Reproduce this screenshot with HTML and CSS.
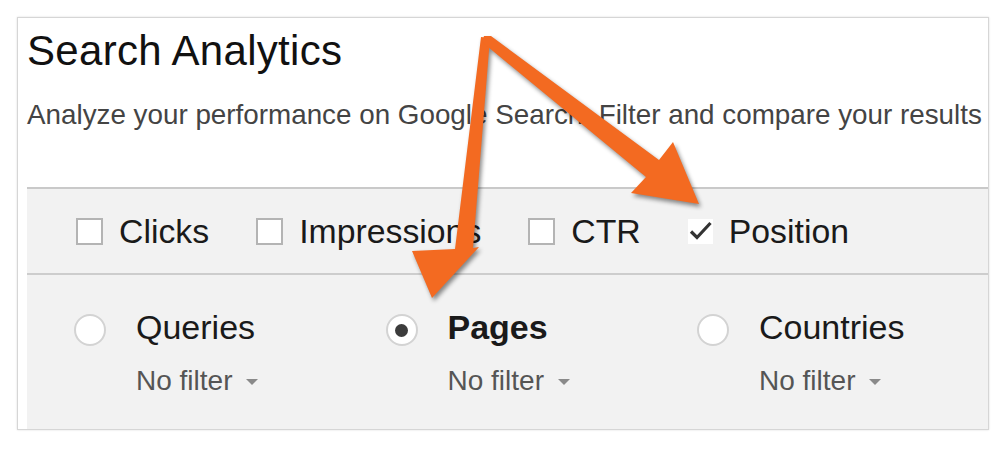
FILE: index.html
```html
<!DOCTYPE html>
<html>
<head>
<meta charset="utf-8">
<link rel="stylesheet" href="styles.css">
</head>
<body>
<div class="card">
  <h1 class="title">Search Analytics</h1>
  <p class="subtitle">Analyze your performance on Google Search. Filter and compare your results</p>
  <div class="panel">
    <div class="metrics">
      <label class="metric"><span class="box"></span><span class="mlabel">Clicks</span></label>
      <label class="metric"><span class="box"></span><span class="mlabel">Impressions</span></label>
      <label class="metric"><span class="box"></span><span class="mlabel">CTR</span></label>
      <label class="metric"><span class="box checked"><svg viewBox="0 0 25 25" width="25" height="25"><path d="M3 12.5 L9 18.5 L22.5 4" fill="none" stroke="#333" stroke-width="3.2"/></svg></span><span class="mlabel">Position</span></label>
    </div>
    <div class="dims">
      <div class="dim">
        <span class="radio"></span>
        <div class="dtext">
          <div class="dlabel">Queries</div>
          <div class="filter">No filter<span class="caret"></span></div>
        </div>
      </div>
      <div class="dim">
        <span class="radio on"><span class="dot"></span></span>
        <div class="dtext">
          <div class="dlabel bold">Pages</div>
          <div class="filter">No filter<span class="caret"></span></div>
        </div>
      </div>
      <div class="dim">
        <span class="radio"></span>
        <div class="dtext">
          <div class="dlabel">Countries</div>
          <div class="filter">No filter<span class="caret"></span></div>
        </div>
      </div>
    </div>
  </div>
</div>
<svg class="arrows" width="1007" height="449" viewBox="0 0 1007 449">
  <polygon points="481,37 490,38 473,248 479,247 432,298 412,251 455,249" />
  <polygon points="484,36 491,36 659,160 673,142 699,204 631,193 646,177 482,42" />
</svg>
</body>
</html>
```
FILE: styles.css
```css
html, body {
  margin: 0;
  padding: 0;
  background: #fff;
}
body {
  width: 1007px;
  height: 449px;
  overflow: hidden;
  position: relative;
  font-family: "Liberation Sans", Arial, sans-serif;
  color: #222;
}
.card {
  margin: 17px 0 0 17px;
  width: 961px;
  height: 402px;
  border: 1px solid #d6d6d6;
  box-shadow: 0 0 2px #ddd;
  background: #fff;
  padding: 9px 0 0 9px;
  box-sizing: content-box;
  display: flex;
  flex-direction: column;
}
.title {
  margin: 0;
  font-weight: normal;
  font-size: 42px;
  line-height: 48px;
  color: #111;
  letter-spacing: 0.3px;
}
.subtitle {
  margin: 24px 0 0 0;
  font-size: 27.8px;
  line-height: 32px;
  color: #444;
  white-space: nowrap;
}
.panel {
  margin-top: 56px;
  flex: 1;
  background: #f2f2f2;
  border-top: 2px solid #c9c9c9;
  display: flex;
  flex-direction: column;
}
.metrics {
  height: 84px;
  display: flex;
  align-items: center;
  gap: 47px;
  padding-left: 49px;
  border-bottom: 2px solid #cdcdcd;
}
.metric {
  display: flex;
  align-items: center;
  gap: 16px;
}
.box {
  width: 23px;
  height: 23px;
  border: 2px solid #b4b4b4;
  background: #fff;
  display: block;
}
.box.checked {
  border: none;
  width: 25px;
  height: 25px;
}
.box svg {
  display: block;
}
.mlabel {
  font-size: 33.8px;
  line-height: 40px;
  color: #1a1a1a;
}
.dims {
  display: flex;
  padding: 32px 0 0 47px;
}
.dim {
  flex: none;
  width: 311.5px;
  display: flex;
  gap: 30px;
}
.radio {
  width: 28px;
  height: 28px;
  border: 2px solid #d3d3d3;
  border-radius: 50%;
  background: #fff;
  margin-top: 7px;
  display: flex;
  align-items: center;
  justify-content: center;
  flex: none;
}
.dot {
  width: 13px;
  height: 13px;
  border-radius: 50%;
  background: #3c3c3c;
}
.dlabel {
  font-size: 34px;
  line-height: 40px;
  color: #1a1a1a;
}
.dlabel.bold {
  font-weight: bold;
}
.filter {
  margin-top: 18px;
  font-size: 28px;
  line-height: 32px;
  color: #555;
  display: flex;
  align-items: center;
}
.caret {
  display: inline-block;
  width: 0;
  height: 0;
  margin-left: 14px;
  margin-top: 2px;
  border-left: 6px solid transparent;
  border-right: 6px solid transparent;
  border-top: 6px solid #8a8a8a;
}
.arrows {
  position: absolute;
  left: 0;
  top: 0;
  pointer-events: none;
  fill: #f36a21;
  filter: drop-shadow(2px 3px 2px rgba(0,0,0,0.45));
}
```
